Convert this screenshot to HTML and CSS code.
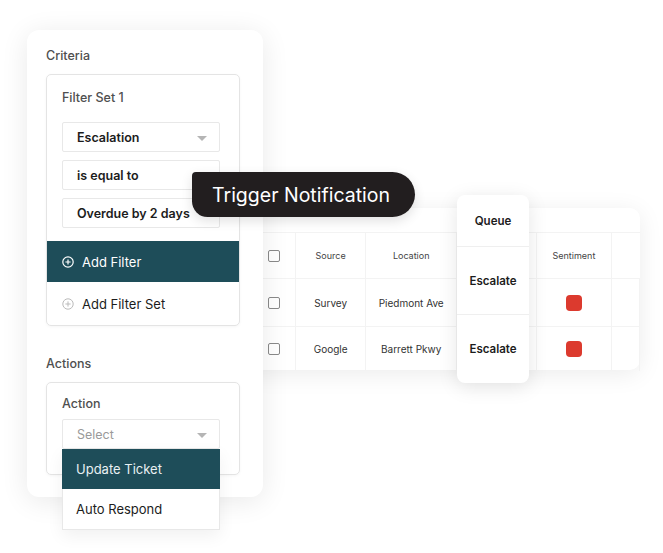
FILE: index.html
```html
<!DOCTYPE html>
<html lang="en">
<head>
    <meta charset="UTF-8">
    <meta name="viewport" content="width=device-width, initial-scale=1.0">
    <title>Trigger Notification</title>
    <link rel="stylesheet" href="styles.css">
</head>
<body>
    <main class="stage">
        <!-- table sits behind the criteria card -->
        <div class="table-card">
            <table class="ticket-table">
                <tr class="head-row">
                    <td class="check-cell"><span class="checkbox"></span></td>
                    <td class="source-cell">Source</td>
                    <td class="location-cell">Location</td>
                    <td class="queue-cell"></td>
                    <td class="sentiment-cell">Sentiment</td>
                    <td class="empty-cell"></td>
                </tr>
                <tr class="data-row">
                    <td class="check-cell"><span class="checkbox"></span></td>
                    <td>Survey</td>
                    <td>Piedmont Ave</td>
                    <td></td>
                    <td><span class="sentiment-dot"></span></td>
                    <td></td>
                </tr>
                <tr class="data-row last-row">
                    <td class="check-cell"><span class="checkbox"></span></td>
                    <td>Google</td>
                    <td>Barrett Pkwy</td>
                    <td></td>
                    <td><span class="sentiment-dot"></span></td>
                    <td></td>
                </tr>
            </table>
        </div>

        <div class="queue-card">
            <div class="queue-item queue-head">Queue</div>
            <div class="queue-item">Escalate</div>
            <div class="queue-item">Escalate</div>
        </div>

        <section class="criteria-card">
            <h4 class="section-label">Criteria</h4>
            <div class="group-box">
                <div class="group-title">Filter Set 1</div>
                <div class="field-list">
                    <div class="select-field">Escalation<span class="caret"></span></div>
                    <div class="select-field">is equal to</div>
                    <div class="select-field">Overdue by 2 days</div>
                </div>
                <div class="add-row add-row-active">
                    <svg class="plus-icon" viewBox="0 0 12 12"><circle cx="6" cy="6" r="5.2" fill="none" stroke="currentColor" stroke-width="1.2"/><path d="M6 3.4v5.2M3.4 6h5.2" stroke="currentColor" stroke-width="1.2"/></svg>
                    Add Filter
                </div>
                <div class="add-row add-row-last">
                    <svg class="plus-icon plus-muted" viewBox="0 0 12 12"><circle cx="6" cy="6" r="5.2" fill="none" stroke="currentColor" stroke-width="1"/><path d="M6 3.4v5.2M3.4 6h5.2" stroke="currentColor" stroke-width="1"/></svg>
                    Add Filter Set
                </div>
            </div>

            <h4 class="section-label actions-label">Actions</h4>
            <div class="group-box action-box">
                <div class="group-title">Action</div>
                <div class="select-wrap">
                    <div class="select-field placeholder">Select<span class="caret"></span></div>
                    <div class="dropdown">
                        <div class="dropdown-item selected">Update Ticket</div>
                        <div class="dropdown-item">Auto Respond</div>
                    </div>
                </div>
            </div>
        </section>

        <div class="trigger-pill">Trigger Notification</div>
    </main>
</body>
</html>
```

FILE: styles.css
```css
body {
    margin: 0;
    padding: 0;
    background-color: #fff;
    font-family: Inter, "Noto Sans", sans-serif;
    color: #1c1c1c;
}

.stage {
    position: relative;
    width: 663px;
    height: 553px;
    padding: 30px 0 0 27px;
    box-sizing: border-box;
}

.criteria-card {
    position: relative;
    width: 236px;
    height: 467px;
    box-sizing: border-box;
    padding: 17px 23px 0 19px;
    background-color: #fff;
    border-radius: 12px;
    box-shadow: 0 4px 28px rgba(0, 0, 0, 0.09);
}

.section-label {
    margin: 0 0 9px 0;
    font-size: 12.5px;
    font-weight: 500;
    color: #4f4f4f;
    line-height: 18px;
}

.actions-label {
    margin-top: 29px;
}

.group-box {
    border: 1px solid #e4e4e4;
    border-radius: 5px;
    box-shadow: 0 1px 3px rgba(0, 0, 0, 0.04);
}

.group-title {
    padding: 14px 15px 0 15px;
    font-size: 12.5px;
    font-weight: 500;
    color: #4f4f4f;
    line-height: 18px;
}

.field-list {
    display: flex;
    flex-direction: column;
    gap: 8px;
    padding: 15px 19px 13px 15px;
}

.select-field {
    position: relative;
    height: 30px;
    box-sizing: border-box;
    border: 1px solid #e8e8e8;
    border-radius: 2px;
    padding: 0 14px;
    display: flex;
    align-items: center;
    font-size: 12.5px;
    font-weight: 600;
    color: #1c1c1c;
}

.caret {
    position: absolute;
    right: 12px;
    top: 13px;
    width: 0;
    height: 0;
    border-left: 5px solid transparent;
    border-right: 5px solid transparent;
    border-top: 5px solid #b5b5b5;
}

.add-row {
    display: flex;
    align-items: center;
    gap: 8px;
    height: 41px;
    padding: 0 15px;
    font-size: 13px;
    color: #1c1c1c;
}

.add-row-last {
    height: 43px;
}

.add-row-active {
    background-color: #1e4d59;
    color: #fff;
}

.plus-icon {
    width: 12px;
    height: 12px;
}

.plus-muted {
    color: #bbb;
}

.action-box {
    height: 93px;
    box-sizing: border-box;
}

.action-box .group-title {
    padding-top: 12px;
}

.select-wrap {
    position: relative;
    margin: 6px 19px 0 15px;
}

.placeholder {
    font-weight: 400;
    color: #9a9a9a;
}

.dropdown {
    position: absolute;
    left: 0;
    right: 0;
    top: 30px;
    z-index: 2;
    background-color: #fff;
    border: 1px solid #e8e8e8;
    box-shadow: 0 6px 16px rgba(0, 0, 0, 0.06);
}

.dropdown-item {
    height: 40px;
    display: flex;
    align-items: center;
    padding: 0 13px;
    font-size: 13px;
    color: #1c1c1c;
}

.dropdown-item.selected {
    background-color: #1e4d59;
    color: #e8f0f2;
    margin: -1px -1px 0 -1px;
    padding-left: 14px;
}

.table-card {
    position: absolute;
    left: 240px;
    top: 208px;
    width: 400px;
    height: 162px;
    box-sizing: border-box;
    padding: 24px 0 0 15px;
    background-color: #fff;
    border-radius: 10px;
    box-shadow: 0 4px 24px rgba(0, 0, 0, 0.08);
}

.ticket-table {
    border-collapse: collapse;
    font-size: 10px;
    color: #333;
}

.ticket-table td {
    padding: 0;
    text-align: center;
    border: 1px solid #f3f3f3;
}

.ticket-table tr td:first-child {
    border-left: none;
}

.ticket-table .last-row td {
    border-bottom: none;
}

.head-row td {
    height: 45px;
    font-size: 9px;
    color: #444;
}

.data-row td {
    height: 47px;
}

.last-row td {
    height: 44px;
}

.check-cell {
    width: 40px;
    text-align: left !important;
}

.source-cell {
    width: 70px;
}

.location-cell {
    width: 90px;
}

.queue-cell {
    width: 80px;
}

.sentiment-cell {
    width: 74px;
}

.empty-cell {
    width: 28px;
    border-right: none !important;
}

.checkbox {
    display: block;
    width: 10px;
    height: 10px;
    margin-left: 13px;
    border: 1px solid #8a8a8a;
    border-radius: 2px;
}

.sentiment-dot {
    display: inline-block;
    width: 16px;
    height: 16px;
    border-radius: 4px;
    background-color: #dc3a2e;
    vertical-align: middle;
}

.queue-card {
    position: absolute;
    left: 457px;
    top: 195px;
    width: 72px;
    height: 188px;
    background-color: #fff;
    border-radius: 8px;
    box-shadow: 0 4px 20px rgba(0, 0, 0, 0.1);
    display: flex;
    flex-direction: column;
}

.queue-item {
    flex: 0 0 67px;
    display: flex;
    align-items: center;
    justify-content: center;
    border-top: 1px solid #efefef;
    font-size: 11.5px;
    font-weight: 600;
    color: #1c1c1c;
}

.queue-item:last-child {
    flex: 1;
}

.queue-head {
    flex: 0 0 51px;
    border-top: none;
}

.trigger-pill {
    position: absolute;
    left: 192px;
    top: 172px;
    z-index: 3;
    width: 223px;
    height: 45px;
    box-sizing: border-box;
    padding: 0 0 0 20px;
    display: flex;
    align-items: center;
    background-color: #221e1f;
    color: #fff;
    font-size: 19.5px;
    border-radius: 4px 23px 23px 16px;
    box-shadow: 0 4px 12px rgba(0, 0, 0, 0.12);
}
```
